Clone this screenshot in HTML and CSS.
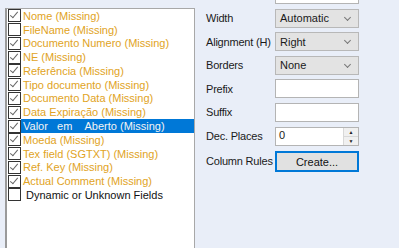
FILE: index.html
```html
<!DOCTYPE html>
<html lang="en">
<head>
    <meta charset="UTF-8">
    <title>Column Properties</title>
    <link rel="stylesheet" href="styles.css">
</head>
<body>
    <div class="dialog">
        <div class="field-list">
            <div class="item missing"><span class="check on"></span>Nome (Missing)</div>
            <div class="item missing"><span class="check"></span>FileName (Missing)</div>
            <div class="item missing"><span class="check on"></span>Documento Numero (Missing)</div>
            <div class="item missing"><span class="check on"></span>NE (Missing)</div>
            <div class="item missing"><span class="check on"></span>Referência (Missing)</div>
            <div class="item missing"><span class="check on"></span>Tipo documento (Missing)</div>
            <div class="item missing"><span class="check on"></span>Documento Data (Missing)</div>
            <div class="item missing"><span class="check on"></span>Data Expiração (Missing)</div>
            <div class="item missing selected"><span class="check on"></span><span class="label">Valor &nbsp;&nbsp;em &nbsp;&nbsp;&nbsp;Aberto (Missing)</span></div>
            <div class="item missing"><span class="check on"></span>Moeda (Missing)</div>
            <div class="item missing"><span class="check on"></span>Tex field (SGTXT) (Missing)</div>
            <div class="item missing"><span class="check on"></span>Ref. Key (Missing)</div>
            <div class="item missing"><span class="check on"></span>Actual Comment (Missing)</div>
            <div class="item dynamic"><span class="check"></span>Dynamic or Unknown Fields</div>
        </div>

        <div class="props">
            <span></span><div class="textbox"></div>

            <label>Width</label>
            <div class="select">Automatic<span class="chevron"></span></div>

            <label>Alignment (H)</label>
            <div class="select">Right<span class="chevron"></span></div>

            <label>Borders</label>
            <div class="select">None<span class="chevron"></span></div>

            <label>Prefix</label>
            <div class="textbox"></div>

            <label>Suffix</label>
            <div class="textbox"></div>

            <label>Dec. Places</label>
            <div class="spinner">
                <span class="value">0</span>
                <span class="arrows">
                    <span class="up">&#9650;</span>
                    <span class="down">&#9660;</span>
                </span>
            </div>

            <label class="rules">Column Rules</label>
            <div class="button">Create...</div>
        </div>
    </div>
</body>
</html>
```

FILE: styles.css
```css
body {
    margin: 0;
    background: #e9eef8;
    font-family: "Liberation Sans", Arial, sans-serif;
    font-size: 11px;
    overflow: hidden;
    height: 248px;
}
.dialog {
    display: flex;
    align-items: flex-start;
}
.field-list {
    margin: 8px 0 0 5px;
    width: 186px;
    height: 239px;
    background: white;
    border: 1px solid #a8a8a8;
    border-bottom: none;
    border-left: 2px solid #9a9a9a;
    padding-left: 1px;
}
.item {
    height: 13.77px;
    display: flex;
    align-items: center;
    color: #e1a324;
    white-space: nowrap;
}
.item.dynamic {
    color: #111;
}
.item.dynamic .check {
    margin-right: 5px;
}
.item.selected .label {
    background: #0078d7;
    color: #f4f4f4;
    flex: 1;
    height: 14px;
    display: flex;
    align-items: center;
    padding-left: 2px;
    margin-left: -2px;
}
.check {
    width: 11px;
    height: 11px;
    border: 1px solid #333;
    background: white;
    margin-right: 2px;
    flex: none;
    position: relative;
}
.check.on::after {
    content: "";
    position: absolute;
    left: 3px;
    top: 0px;
    width: 3px;
    height: 7px;
    border-right: 1px solid #666;
    border-bottom: 1px solid #666;
    transform: rotate(40deg);
}
.props {
    display: grid;
    grid-template-columns: 69px 84px;
    grid-auto-rows: 19px;
    row-gap: 4.6px;
    margin: -15px 0 0 11px;
    color: #1a1a1a;
}
.props label {
    display: flex;
    align-items: center;
    white-space: nowrap;
    letter-spacing: -0.2px;
}
.props label.rules {
    padding-top: 3px;
}
.textbox {
    background: white;
    border: 1px solid #b4b4b4;
}
.select {
    background: #e3e3e3;
    border: 1px solid #b8b8b8;
    display: flex;
    align-items: center;
    padding-left: 4px;
    position: relative;
}
.chevron {
    position: absolute;
    right: 8px;
    top: 5px;
    width: 4px;
    height: 4px;
    border-right: 1px solid #777;
    border-bottom: 1px solid #777;
    transform: rotate(45deg);
}
.spinner {
    background: white;
    border: 1px solid #b4b4b4;
    display: flex;
    height: 17px;
}
.spinner .value {
    flex: 1;
    padding: 1px 0 0 3px;
}
.arrows {
    width: 14px;
    display: flex;
    flex-direction: column;
    border-left: 1px solid #d8d8d8;
    font-size: 5px;
    color: #222;
}
.arrows span {
    flex: 1;
    display: flex;
    align-items: center;
    justify-content: center;
    background: #f0f0f0;
}
.arrows .up {
    border-bottom: 1px solid #d8d8d8;
}
.button {
    height: 17px;
    margin-top: 1px;
    border: 2px solid #0078d7;
    background: #e1e1e1;
    display: flex;
    align-items: center;
    justify-content: center;
    color: #111;
}
```
